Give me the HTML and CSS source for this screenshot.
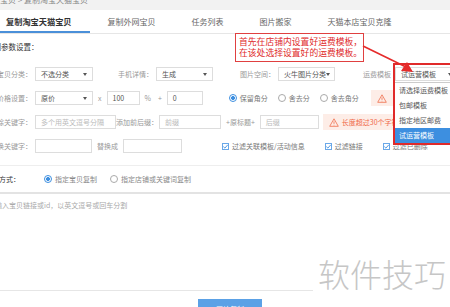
FILE: index.html
```html
<!DOCTYPE html>
<html lang="zh-CN">
<head>
    <meta charset="UTF-8">
    <title>复制淘宝天猫宝贝</title>
    <link rel="stylesheet" href="styles.css">
</head>
<body>
    <div class="crumb"><span>淘宝贝 &gt; 复制淘宝天猫宝贝</span></div>
    <div class="tabs">
        <div class="tab active">复制淘宝天猫宝贝</div>
        <div class="tab">复制外网宝贝</div>
        <div class="tab">任务列表</div>
        <div class="tab">图片搬家</div>
        <div class="tab">天猫本店宝贝克隆</div>
    </div>

    <div class="section-title">复制参数设置：</div>

    <div class="form">
        <div class="row">
            <span class="label">宝贝分类：</span>
            <div class="select w58">不选分类<i class="caret"></i></div>
            <span class="label l60">手机详情：</span>
            <div class="select w57">生成<i class="caret"></i></div>
            <span class="label l62">图片空间：</span>
            <div class="select w57">火牛图片分类<i class="caret"></i></div>
            <span class="label l56">运费模板</span>
            <div class="freight">
                <div class="select w60">试运营模板<i class="caret"></i></div>
                <ul class="options">
                    <li>请选择运费模板</li>
                    <li>包邮模板</li>
                    <li>指定地区邮费</li>
                    <li class="on">试运营模板</li>
                </ul>
                <div class="frame"></div>
            </div>
        </div>

        <div class="row">
            <span class="label">价格设置：</span>
            <div class="select w58">原价<i class="caret"></i></div>
            <span class="op">x</span>
            <div class="input w33">100</div>
            <span class="op">%</span>
            <span class="op">+</span>
            <div class="input w36">0</div>
            <div class="radios">
                <span class="radio checked"></span>保留角分
                <span class="radio"></span>舍去分
                <span class="radio"></span>舍去角分
            </div>
            <div class="warn">
                <svg width="10" height="9" viewBox="0 0 10 9"><path d="M5 0.8 L9.3 8.3 H0.7 Z" fill="none" stroke="#f07c5c" stroke-width="0.9"/><path d="M5 3.3 V5.9 M5 6.8 V7.4" stroke="#f07c5c" stroke-width="0.9"/></svg>
                （"减价"模式下有效）
            </div>
        </div>

        <div class="row">
            <span class="label">删除关键字：</span>
            <div class="input w81 hint">多个用英文逗号分隔</div>
            <span class="label l40">添加前后缀：</span>
            <div class="input w62 hint">前缀</div>
            <span class="op">+原标题+</span>
            <div class="input w59 hint">后缀</div>
            <div class="warn long">
                <svg width="10" height="9" viewBox="0 0 10 9"><path d="M5 0.8 L9.3 8.3 H0.7 Z" fill="none" stroke="#f07c5c" stroke-width="0.9"/><path d="M5 3.3 V5.9 M5 6.8 V7.4" stroke="#f07c5c" stroke-width="0.9"/></svg>
                长度超过30个字符将被截断
            </div>
        </div>

        <div class="row">
            <span class="label">替换关键字：</span>
            <div class="input w57"></div>
            <span class="op">替换成</span>
            <div class="input w59"></div>
            <div class="checks">
                <span class="check"><svg width="7" height="7" viewBox="0 0 7 7"><path d="M1.3 3.6 L2.9 5.1 L5.8 1.8" fill="none" stroke="#3d8fe0" stroke-width="0.9"/></svg></span>过滤关联模板/活动信息
                <span class="check"><svg width="7" height="7" viewBox="0 0 7 7"><path d="M1.3 3.6 L2.9 5.1 L5.8 1.8" fill="none" stroke="#3d8fe0" stroke-width="0.9"/></svg></span>过滤链接
                <span class="check"><svg width="7" height="7" viewBox="0 0 7 7"><path d="M1.3 3.6 L2.9 5.1 L5.8 1.8" fill="none" stroke="#3d8fe0" stroke-width="0.9"/></svg></span>过滤已删除
            </div>
        </div>
    </div>

    <div class="method">
        <span class="label short">复制方式：</span>
        <span class="radio checked"></span><span class="opt">指定宝贝复制</span>
        <span class="radio"></span><span class="opt">指定店铺或关键词复制</span>
    </div>

    <div class="links">
        <div class="area">输入宝贝链接或id，以英文逗号或回车分割</div>
    </div>

    <div class="actions">
        <button class="btn">开始复制</button>
    </div>

    <div class="note">首先在店铺内设置好运费模板，<br>在该处选择设置好的运费模板。</div>
    <svg class="arrow" width="60" height="34" viewBox="0 0 60 34">
        <path d="M2 4 L45 25" stroke="#e52b2b" stroke-width="1.6"/>
        <path d="M52 30 L40 29 L46 20 Z" fill="#e52b2b"/>
    </svg>
    <div class="watermark">软件技巧</div>
</body>
</html>
```

FILE: styles.css
```css
body {
    margin: 0;
    width: 450px;
    height: 307px;
    overflow: hidden;
    position: relative;
    background: #fff;
    font-family: "Noto Sans CJK SC", "Noto Sans", sans-serif;
    font-size: 7px;
    color: #555;
}
.crumb {
    height: 10px;
    background: #f2f2f2;
    overflow: hidden;
    color: #888;
    font-size: 8px;
}
.crumb span {
    display: block;
    line-height: 8px;
    margin-top: -4px;
    margin-left: -8px;
}
.tabs {
    display: flex;
    height: 23px;
    margin-left: -12px;
    border-bottom: 1px solid #e6e6e6;
}
.tab {
    padding: 0 18px;
    line-height: 23px;
    font-size: 8px;
    color: #666;
}
.tab.active {
    font-weight: bold;
    color: #333;
    font-size: 8.2px;
    box-shadow: inset 0 -2px 0 #4a90d9;
}
.section-title {
    height: 28px;
    line-height: 26px;
    margin-left: -14px;
    font-size: 7.5px;
    color: #333;
}
.form {
    margin-left: -16px;
    padding-bottom: 7px;
    border-bottom: 1px solid #eee;
}
.row {
    display: flex;
    align-items: center;
    height: 24px;
    white-space: nowrap;
}
.label {
    width: 48px;
    flex-shrink: 0;
    text-align: right;
    margin-right: 3px;
    color: #999;
}
.l60 { width: 60px; }
.l62 { width: 62px; }
.l56 { width: 56px; margin-right: 4px; }
.l40 { width: 40px; }
.select, .input {
    box-sizing: border-box;
    height: 14px;
    border: 1px solid #ddd;
    padding: 0 5px;
    line-height: 12px;
    color: #555;
    flex-shrink: 0;
}
.select {
    display: flex;
    align-items: center;
    justify-content: space-between;
}
.caret {
    width: 0;
    height: 0;
    border-left: 2.5px solid transparent;
    border-right: 2.5px solid transparent;
    border-top: 3px solid #555;
}
.hint { color: #bbb; }
.w33 { width: 33px; }
.w36 { width: 36px; }
.w57 { width: 57px; }
.w58 { width: 58px; }
.w59 { width: 59px; }
.w60 { width: 60px; }
.w62 { width: 62px; }
.w81 { width: 81px; }
.op {
    margin: 0 5px;
    color: #999;
}
.row .op + .op { margin-left: 2px; }
.freight {
    position: relative;
}
.freight .select {
    padding-right: 2px;
}
.options {
    position: absolute;
    left: -1px;
    top: 15px;
    width: 62px;
    margin: 0;
    padding: 0;
    list-style: none;
    background: #fff;
    border: 1px solid #ccc;
    z-index: 3;
}
.options li {
    height: 15px;
    line-height: 15px;
    padding-left: 4px;
    color: #555;
}
.options li.on {
    background: #3d8fe0;
    color: #fff;
}
.frame {
    position: absolute;
    left: -2px;
    top: -4px;
    width: 70px;
    height: 78px;
    border: 2px solid #e02a2a;
    z-index: 4;
}
.radios, .checks {
    display: flex;
    align-items: center;
}
.radios {
    margin-left: 26px;
    color: #777;
}
.radio {
    box-sizing: border-box;
    width: 8px;
    height: 8px;
    border: 1px solid #aaa;
    border-radius: 50%;
    margin: 0 3px 0 10px;
    flex-shrink: 0;
}
.radios .radio:first-child { margin-left: 0; }
.radio.checked {
    border-color: #3d8fe0;
    background: radial-gradient(circle, #3d8fe0 1.8px, #fff 2.2px);
}
.warn {
    display: flex;
    align-items: center;
    gap: 3px;
    height: 16px;
    padding: 0 6px;
    margin-left: 12px;
    background: #fdede7;
    color: #f06a4a;
}
.warn.long { margin-left: 4px; }
.checks {
    margin-left: 40px;
    color: #777;
}
.check {
    box-sizing: border-box;
    display: flex;
    width: 7px;
    height: 7px;
    border: 1px solid #6aa8e8;
    margin: 0 3px 0 20px;
    flex-shrink: 0;
}
.check svg {
    margin: -1px;
}
.checks .check:first-child { margin-left: 0; }
.method {
    display: flex;
    align-items: center;
    height: 26px;
    margin-left: -28px;
    border-bottom: 2px solid #e3e3e3;
}
.label.short {
    width: 48px;
    color: #333;
    margin-right: 11px;
}
.method .radio:first-of-type { margin-left: 0; }
.method .radio { margin-left: 13px; }
.method .opt { color: #888; }
.links {
    width: 313px;
    height: 96px;
    border-bottom: 1px solid #e6e6e6;
}
.area {
    padding-top: 6px;
    margin-left: -5px;
    color: #aaa;
}
.actions {
    display: flex;
    justify-content: center;
    padding-top: 8px;
    padding-left: 10px;
}
.btn {
    width: 64px;
    height: 20px;
    border: none;
    background: #5ba1e6;
    color: #fff;
    font-family: inherit;
    font-size: 7px;
    padding: 0;
}
.note {
    position: absolute;
    left: 235px;
    top: 33px;
    width: 124px;
    padding: 3px 0 3px 3px;
    border: 1px solid #e04040;
    background: rgba(255, 255, 255, 0.92);
    color: #e02b2b;
    font-size: 8.8px;
    line-height: 10.5px;
    white-space: nowrap;
    z-index: 2;
}
.arrow {
    position: absolute;
    left: 361px;
    top: 42px;
    z-index: 5;
}
.watermark {
    position: absolute;
    left: 318px;
    top: 250px;
    font-size: 32px;
    font-weight: 300;
    color: #c6c6c6;
    letter-spacing: 0;
}
```
